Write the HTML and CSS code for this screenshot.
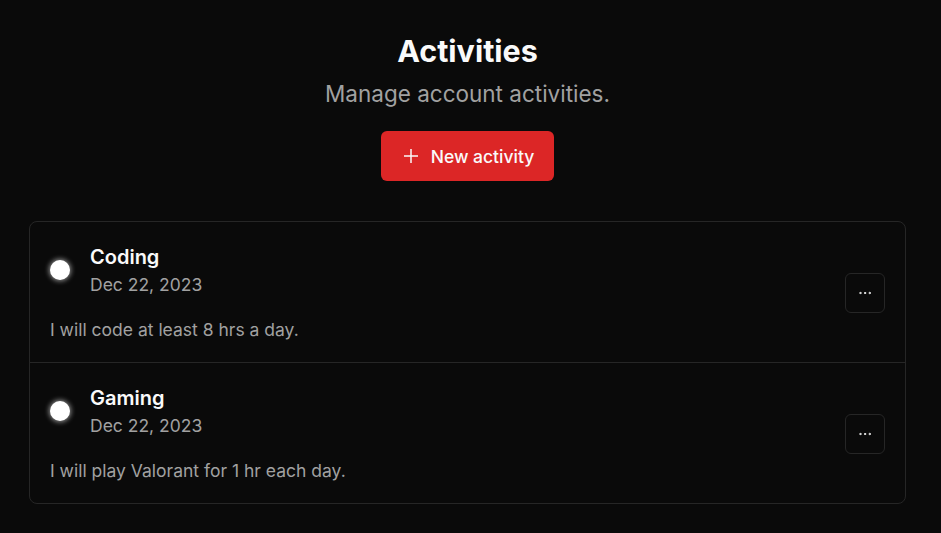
FILE: index.html
```html
<!DOCTYPE html>
<html lang="en">
<head>
<meta charset="utf-8">
<title>Activities</title>
<link rel="stylesheet" href="styles.css">
</head>
<body>
<main class="page">
  <header class="head">
    <h1 class="title">Activities</h1>
    <p class="subtitle">Manage account activities.</p>
    <button class="btn-primary" type="button">
      <svg class="plus" viewBox="0 0 16 16" width="16" height="16" fill="none" stroke="currentColor" stroke-width="1.5" stroke-linecap="butt"><path d="M1 8h14"/><path d="M8 1v14"/></svg>
      <span>New activity</span>
    </button>
  </header>
  <section class="card">
    <div class="row">
      <div class="info">
        <div class="top">
          <span class="dot"></span>
          <div class="meta">
            <div class="name">Coding</div>
            <div class="date">Dec 22, 2023</div>
          </div>
        </div>
        <p class="desc">I will code at least 8 hrs a day.</p>
      </div>
      <button class="btn-more" type="button" aria-label="More">
        <svg viewBox="0 0 24 24" width="16" height="16" fill="none" stroke="currentColor" stroke-width="1.5" stroke-linecap="round" stroke-linejoin="round"><circle cx="12" cy="12" r="1"/><circle cx="19" cy="12" r="1"/><circle cx="5" cy="12" r="1"/></svg>
      </button>
    </div>
    <div class="row">
      <div class="info">
        <div class="top">
          <span class="dot"></span>
          <div class="meta">
            <div class="name">Gaming</div>
            <div class="date">Dec 22, 2023</div>
          </div>
        </div>
        <p class="desc">I will play Valorant for 1 hr each day.</p>
      </div>
      <button class="btn-more" type="button" aria-label="More">
        <svg viewBox="0 0 24 24" width="16" height="16" fill="none" stroke="currentColor" stroke-width="1.5" stroke-linecap="round" stroke-linejoin="round"><circle cx="12" cy="12" r="1"/><circle cx="19" cy="12" r="1"/><circle cx="5" cy="12" r="1"/></svg>
      </button>
    </div>
  </section>
</main>
</body>
</html>
```

FILE: styles.css
```css
* { box-sizing: border-box; }
html, body {
  margin: 0;
  padding: 0;
  background: #0a0a0a;
  color: #fafafa;
  font-family: Inter, "Noto Sans", sans-serif;
}
.page {
  width: 877px;
  margin-left: 29px;
  padding-top: 33px;
}
.head {
  display: flex;
  flex-direction: column;
  align-items: center;
}
.title {
  margin: 0;
  font-size: 30.5px;
  line-height: 36px;
  font-weight: 700;
}
.subtitle {
  margin: 11px 0 0;
  font-size: 22.5px;
  line-height: 28px;
  color: #a1a1a1;
}
.btn-primary {
  margin-top: 23px;
  height: 50px;
  padding: 0 20px 0 22px;
  display: flex;
  align-items: center;
  gap: 12px;
  background: #dc2626;
  color: #fafafa;
  border: none;
  border-radius: 6px;
  font-family: inherit;
  font-size: 17.5px;
  font-weight: 500;
}
.card {
  margin-top: 40px;
  border: 1px solid #262626;
  border-radius: 8px;
}
.row {
  display: flex;
  align-items: center;
  justify-content: space-between;
  padding: 21px 20px 20px 20px;
}
.row + .row { border-top: 1px solid #262626; }
.top {
  display: flex;
  align-items: center;
  gap: 20px;
}
.dot {
  width: 20px;
  height: 20px;
  margin-bottom: 2px;
  border-radius: 50%;
  background: #fff;
  box-shadow: 0 0 5px 1px rgba(255,255,255,0.55);
}
.name {
  font-size: 20px;
  line-height: 28px;
  font-weight: 600;
}
.date {
  font-size: 17.5px;
  line-height: 28px;
  color: #a1a1a1;
}
.desc {
  margin: 19px 0 0;
  font-size: 17.5px;
  line-height: 24px;
  color: #a1a1a1;
}
.btn-more {
  width: 40px;
  height: 40px;
  display: flex;
  align-items: center;
  justify-content: center;
  padding: 0;
  background: #0a0a0a;
  color: #fafafa;
  border: 1px solid #262626;
  border-radius: 6px;
}
```
